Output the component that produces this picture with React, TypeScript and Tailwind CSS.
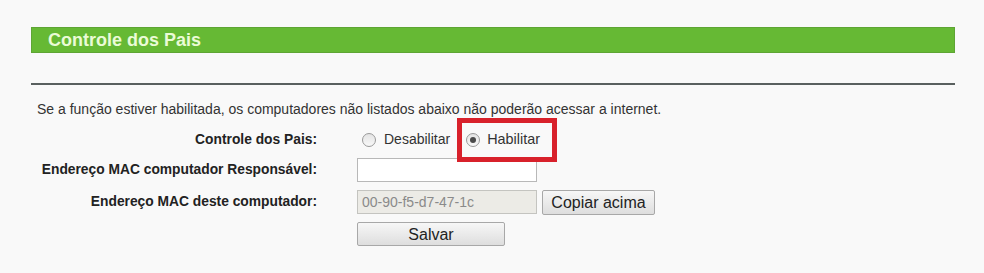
import React from "react";

function Radio({ checked }: { checked?: boolean }) {
  return (
    <span className="relative inline-flex h-[14px] w-[14px] items-center justify-center rounded-full border border-[#9a9a9a] bg-gradient-to-b from-[#e4e4e4] to-[#f8f8f8]">
      {checked && <span className="h-[6px] w-[6px] rounded-full bg-[#4a4a4a]" />}
    </span>
  );
}

export default function App() {
  return (
    <div
      className="h-[273px] w-full bg-[#f9f9f9] pt-[27px] text-[#222]"
      style={{ fontFamily: '"Liberation Sans", Arial, sans-serif' }}
    >
      <div className="ml-[31px] w-[924px]">
        <div className="flex h-[26px] items-center border border-[#5ea534] bg-[#66b934] pl-[16px]">
          <span className="text-[18px] font-bold text-[#eafbd6]">Controle dos Pais</span>
        </div>
        <div className="mt-[30px] h-[2px] bg-[#59605f]" />
      </div>
      <div className="ml-[37px] mt-[16px] text-[14px] leading-[16px] text-[#333]">
        Se a função estiver habilitada, os computadores não listados abaixo não poderão acessar a internet.
      </div>
      <div className="mt-[8px] flex h-[30px] items-center">
        <div className="w-[317px] text-right text-[13.8px] font-bold">Controle dos Pais:</div>
        <div className="ml-[45px] flex items-center text-[14px] text-[#333]">
          <label className="flex items-center">
            <Radio />
            <span className="ml-[8px]">Desabilitar</span>
          </label>
          <label className="relative ml-[16px] flex items-center">
            <Radio checked />
            <span className="ml-[7px] text-[14.4px]">Habilitar</span>
            <span className="pointer-events-none absolute left-[-9px] top-1/2 h-[44px] w-[100px] -translate-y-1/2 border-[5px] border-[#d8212b]" />
          </label>
        </div>
      </div>
      <div className="mt-[3px] flex h-[24px] items-center">
        <div className="w-[317px] text-right text-[13.8px] font-bold">Endereço MAC computador Responsável:</div>
        <input
          className="ml-[40px] h-[24px] w-[180px] border border-[#b8b8b8] bg-white px-[5px] text-[14px] outline-none"
          defaultValue=""
        />
      </div>
      <div className="mt-[8px] flex h-[24px] items-center">
        <div className="w-[317px] text-right text-[13.8px] font-bold">Endereço MAC deste computador:</div>
        <input
          disabled
          className="ml-[40px] h-[24px] w-[180px] border border-[#c4c4c0] bg-[#ecebe6] px-[4px] text-[14px] text-[#8a8a8a] outline-none"
          defaultValue="00-90-f5-d7-47-1c"
        />
        <button className="ml-[5px] h-[25px] w-[113px] rounded-[2px] border border-[#a8a8a8] bg-gradient-to-b from-[#f7f7f7] to-[#dedede] text-[16px] text-[#222]">
          Copiar acima
        </button>
      </div>
      <div className="mt-[8px] flex h-[24px] items-center">
        <div className="w-[317px]" />
        <button className="ml-[40px] h-[24px] w-[148px] rounded-[2px] border border-[#a8a8a8] bg-gradient-to-b from-[#f7f7f7] to-[#dedede] text-[16px] text-[#222]">
          Salvar
        </button>
      </div>
    </div>
  );
}
